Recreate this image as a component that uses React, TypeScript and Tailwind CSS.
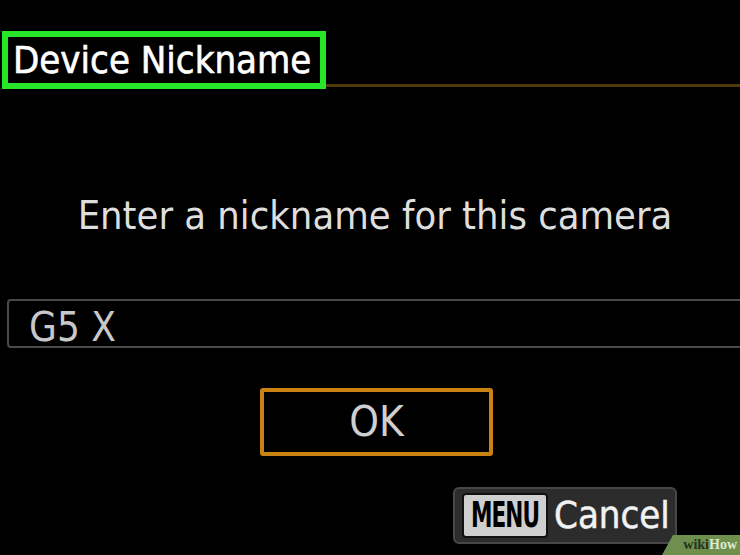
import React, { JSX } from "react";

const cam = "font-['DejaVu_Sans_Condensed','DejaVu_Sans',sans-serif] font-stretch-condensed";

export default function App(): JSX.Element {
  return (
    <div className={`relative w-[740px] h-[555px] overflow-hidden bg-black ${cam}`}>
      {/* title row */}
      <div className="flex flex-row items-end pt-[31px] pl-[2px]">
        <div className="w-[324px] h-[58px] border-[6px] border-[#27e627] pl-[5px] text-[38px] leading-[46px] text-white whitespace-nowrap [-webkit-text-stroke:0.6px_white]">
          Device Nickname
        </div>
        <div className="flex-1 h-[3px] mb-[2px] bg-[#4f3b08]" />
      </div>

      <p className="mt-[107px] pl-[10px] text-center text-[39.5px] leading-none text-[#dedede] whitespace-nowrap">
        Enter a nickname for this camera
      </p>

      {/* input field */}
      <div className="mt-[63px] ml-[7px] w-[760px] h-[49px] border-2 border-[#4a4a4a] rounded-[4px] flex items-start pt-[6px] pl-[20px]">
        <span className="text-[40px] leading-none text-[#c8c8c8]">G5 X</span>
      </div>

      {/* OK button */}
      <div className="mt-[40px] ml-[260px] w-[233px] h-[68px] border-4 border-[#c98211] rounded-[3px] flex items-center justify-center">
        <span className="text-[42px] leading-none text-[#cfcfcf]">OK</span>
      </div>

      {/* MENU Cancel */}
      <div className="mt-[31px] ml-[453px] w-[224px] h-[57px] bg-[#2c2c2c] border-2 border-[#474747] rounded-[6px] flex items-center pl-[7px] gap-[6px]">
        <div className="w-[86px] h-[45px] bg-[#cfcfcf] border-2 border-[#111] rounded-[4px] flex items-center justify-center">
          <span className="inline-block text-[24px] leading-none font-bold text-black tracking-[-1px] scale-y-[1.45]">
            MENU
          </span>
        </div>
        <span className="text-[38px] leading-none text-[#f2f2f2] [-webkit-text-stroke:0.5px_#f2f2f2]">Cancel</span>
      </div>

      {/* wikiHow badge */}
      <div className="absolute right-0 bottom-0 w-[78px] h-[20px] bg-[#6f8f4f] [clip-path:polygon(11px_0,100%_0,100%_100%,0_100%)] flex items-center justify-end pr-[3px] font-['Liberation_Serif',serif] font-bold text-[14px] leading-none">
        <span className="text-[#24341a]">wiki</span>
        <span className="text-[#dfe8d2]">How</span>
      </div>
    </div>
  );
}
